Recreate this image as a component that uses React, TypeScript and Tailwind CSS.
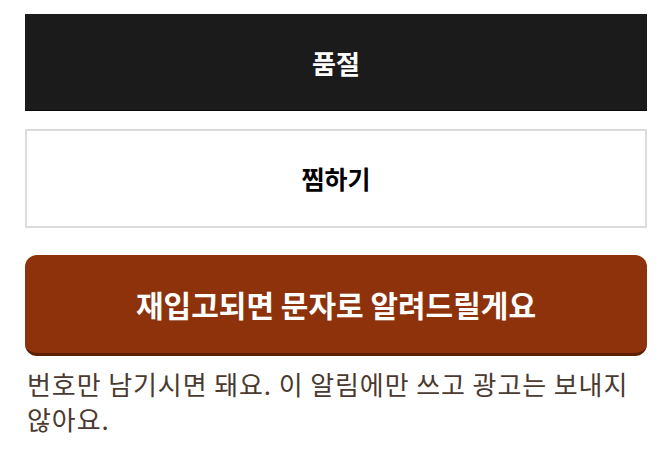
import React from 'react'

const App: React.FC = () => {
  return (
    <div
      className="w-[672px] h-[465px] bg-white px-[25px] pt-[14px]"
      style={{ fontFamily: '"Noto Sans CJK KR", "Noto Sans", sans-serif' }}
    >
      {/* Sold out state */}
      <div className="h-[97px] bg-[#1b1b1b] border-b border-[#0a0a0a] flex items-center justify-center">
        <span className="text-white text-[26px] font-bold">품절</span>
      </div>

      {/* Wishlist */}
      <button className="mt-[18px] w-full h-[99px] bg-white border-2 border-[#dcdcdc] flex items-center justify-center">
        <span className="text-black text-[25px] font-bold">찜하기</span>
      </button>

      {/* Restock alert */}
      <button className="mt-[27px] w-full h-[101px] bg-[#8d320b] rounded-[12px] border-b-[3px] border-[#5c1f05] flex items-center justify-center">
        <span className="text-white text-[30px] font-bold">재입고되면 문자로 알려드릴게요</span>
      </button>

      <p className="mt-[10px] text-[26px] tracking-[0.9px] leading-[35px] text-[#4a3a30] pl-[2px] break-keep">
        번호만 남기시면 돼요. 이 알림에만 쓰고 광고는 보내지 않아요.
      </p>
    </div>
  )
}

export default App
